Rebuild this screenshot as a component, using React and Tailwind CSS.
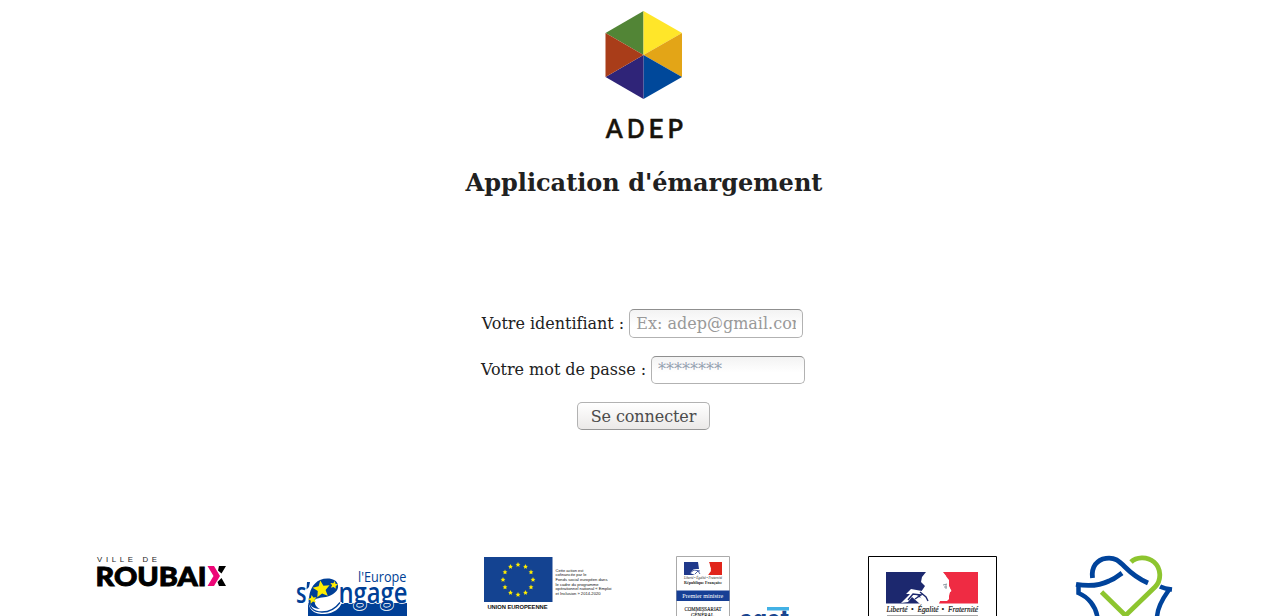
const serif = 'DejaVu Serif, serif';
const sans = 'Liberation Sans, sans-serif';

function AdepLogo() {
  return (
    <svg className="block h-[140px] w-[90px] shrink-0" viewBox="599 4 90 140" role="img" aria-label="ADEP">
      <path d="M643.5 55V11L605.5 33Z" fill="#528536" />
      <path d="M643.5 55V11L682 33Z" fill="#ffe629" />
      <path d="M643.5 55L682 33V77Z" fill="#e3a517" />
      <path d="M643.5 55L682 77L643.5 99Z" fill="#00489a" />
      <path d="M643.5 55V99L605.5 77Z" fill="#2f2478" />
      <path d="M643.5 55L605.5 77V33Z" fill="#a93d19" />
      <g fill="#17130b" stroke="#17130b" strokeWidth="0.5" fontFamily="Lato, sans-serif" fontWeight="600" fontSize="26.5">
        <text x="605.8" y="138" textLength="17" lengthAdjust="spacingAndGlyphs">A</text>
        <text x="627" y="138" textLength="17.5" lengthAdjust="spacingAndGlyphs">D</text>
        <text x="648.5" y="138" textLength="15" lengthAdjust="spacingAndGlyphs">E</text>
        <text x="667.5" y="138" textLength="15.5" lengthAdjust="spacingAndGlyphs">P</text>
      </g>
    </svg>
  );
}

function RoubaixLogo() {
  return (
    <svg className="h-[62px] w-[132px] shrink-0" viewBox="96 554 132 62">
      <text x="97" y="561.5" fontFamily={sans} fontSize="7.8" fill="#222" textLength="60">VILLE DE</text>
      <text x="95.5" y="585.6" fontFamily="Lato, sans-serif" fontWeight="900" fontSize="26.5" fill="#000" stroke="#000" strokeWidth="0.9" textLength="111" lengthAdjust="spacingAndGlyphs">ROUBAI</text>
      <path d="M207.5 566H214L220 576L214 586H207.5L213.5 576Z" fill="#ed0677" />
      <path d="M219 566H226L221.5 573.5L218 570.5ZM221.5 578L226 586H219L217.5 582Z" fill="#000" />
    </svg>
  );
}

function Star({ x, y, r, turn = 0 }) {
  const points = Array.from({ length: 10 }, (_, i) => {
    const a = ((i * 36 - 90 + turn) * Math.PI) / 180;
    const d = i % 2 ? r * 0.46 : r;
    return `${x + d * Math.cos(a)},${y + d * Math.sin(a)}`;
  }).join(' ');
  return <polygon points={points} fill="#ffed00" />;
}

function EngageLogo() {
  return (
    <svg className="h-[62px] w-[113px] shrink-0" viewBox="295 554 113 62">
      <path d="M308 603H407V616H308Z" fill="#003f96" />
      <text x="358" y="582" fontFamily="Open Sans, sans-serif" fontSize="15" fill="#003f96" textLength="48.5" lengthAdjust="spacingAndGlyphs">l'Europe</text>
      <g fontFamily="Open Sans, sans-serif" fontWeight="600" fontSize="28" fill="#003f96">
        <text x="296" y="602.5" textLength="10.5" lengthAdjust="spacingAndGlyphs">s</text>
        <text x="338.5" y="602.5" textLength="69" lengthAdjust="spacingAndGlyphs" stroke="#fff" strokeWidth="1.6" paintOrder="stroke">ngage</text>
      </g>
      <path d="M307 582H310L309 587L306.5 589.5Z" fill="#003f96" />
      <path d="M309 597C306 609 315 615 325 614C334 613 340 609 342 602H337L331 594Z" fill="#fff" />
      <path d="M309.5 598C308 607 313 612 322 612C330 612 336 608 340 602.5" fill="none" stroke="#003f96" strokeWidth="1.3" />
      <path d="M309 600C309 591 313 583 320 580C328 577 337 579 338 585C339 591 333 595 326 597C320 598 316 598 315 600C314 604 316 607 320 609C313 609 309 605 309 600Z" fill="#003f96" />
      <Star x={321.5} y={589.3} r={9} turn={-8} />
      <Star x={334} y={585} r={4.2} turn={12} />
      <Star x={312.5} y={599.5} r={4.6} turn={-12} />
    </svg>
  );
}

const notice = [
  ['Cette action est', 28],
  ['cofinancée par le', 31],
  ['Fonds social européen dans', 52],
  ['le cadre du programme', 43],
  ['opérationnel national « Emploi', 56],
  ['et Inclusion » 2014-2020', 45],
];

function UnionLogo() {
  return (
    <svg className="h-[62px] w-[130px] shrink-0" viewBox="483 554 130 62">
      <rect x="484" y="557" width="68.5" height="45" fill="#144391" />
      {Array.from({ length: 12 }, (_, i) => {
        const a = (i * Math.PI) / 6;
        return <Star key={i} x={518 + 15 * Math.sin(a)} y={579.7 - 15 * Math.cos(a)} r={2.6} />;
      })}
      <text x="487.5" y="609" fontFamily={sans} fontWeight="700" fontSize="5.8" fill="#111" textLength="60">UNION EUROPEENNE</text>
      {notice.map(([line, width], i) => (
        <text key={line} x="555.5" y={571.8 + i * 4.6} fontFamily={sans} fontSize="4.4" fill="#111" textLength={width} lengthAdjust="spacingAndGlyphs">{line}</text>
      ))}
    </svg>
  );
}

function CgetLogo() {
  return (
    <svg className="h-[62px] w-[115px] shrink-0" viewBox="675 554 115 62">
      <path d="M676.5 616V556.5H729.5V616" fill="#fff" stroke="#aaa" />
      <rect x="684" y="562" width="16" height="13" fill="#20398b" />
      <path d="M709 562H722V575H708L711 571Z" fill="#e1251b" />
      <path d="M698 562H709L711 569L709.5 571L708 575H695L690 573L694 569L699 569Z" fill="#fff" />
      <path d="M690 573L694 570L700 571M695 574L698 571L700 574" fill="none" stroke="#20398b" strokeWidth="0.8" />
      <g textAnchor="middle" fontFamily="Liberation Serif, serif" fill="#222">
        <text x="703" y="579" fontSize="3.8" fontStyle="italic" textLength="38" lengthAdjust="spacingAndGlyphs">Liberté • Égalité • Fraternité</text>
        <text x="703" y="584.3" fontSize="4.3" fontWeight="700" textLength="38" lengthAdjust="spacingAndGlyphs">République Française</text>
        <rect x="676.5" y="590.5" width="53" height="10.5" fill="#163f95" />
        <text x="702.8" y="597.6" fontSize="6.4" fill="#fff" textLength="41" lengthAdjust="spacingAndGlyphs">Premier ministre</text>
        <text x="703" y="611" fontSize="5.6" textLength="37" lengthAdjust="spacingAndGlyphs" stroke="#222" strokeWidth="0.15">COMMISSARIAT</text>
        <text x="702.5" y="616.5" fontSize="5.6" textLength="23" lengthAdjust="spacingAndGlyphs" stroke="#222" strokeWidth="0.15">GÉNÉRAL</text>
      </g>
      <rect x="767" y="607" width="22" height="3.5" fill="#42b1e5" />
      <text x="739" y="628" fontFamily="Inter, sans-serif" fontSize="25" fontWeight="800" fill="#19458f" textLength="50" lengthAdjust="spacingAndGlyphs">cget</text>
    </svg>
  );
}

function RepubliqueLogo() {
  return (
    <svg className="h-[62px] w-[130px] shrink-0" viewBox="867 554 130 62">
      <path d="M868.5 616V556.5H996.5V616" fill="#fff" stroke="#000" />
      <rect x="886" y="572" width="43" height="31.5" fill="#1c286e" />
      <path d="M942 572H978V603.5H939L940 600.5L948 600L949 596L950 592L951.5 591L949 586L949 580L945 575Z" fill="#ef2b43" />
      <path d="M926 572H943L946 576L947 582L951 591L949 593L949 599L947 601H940L938 604H926L920 597L921 592L925 586L921 582L922 577Z" fill="#fff" />
      <path d="M901 603L910 594L906 594L911 589L922 591L928 584L925 592L917 596L925 600L928 604H920L912 597L908 602Z" fill="#fff" />
      <path d="M908 600L913 594L921 595L915 599M920 592L926 597L928 601" fill="none" stroke="#1c286e" strokeWidth="1.4" />
      <path d="M943 585L947 584M944 587H947M946 584L946 589" stroke="#8d98a0" strokeWidth="1" />
      <g fontFamily="Liberation Serif, serif" fontStyle="italic" fontSize="7.4" fill="#111" stroke="#111" strokeWidth="0.15">
        <text x="886.5" y="612.3" textLength="21">Liberté</text>
        <text x="911" y="612.3">•</text>
        <text x="917.5" y="612.3" textLength="21">Égalité</text>
        <text x="941.5" y="612.3">•</text>
        <text x="948" y="612.3" textLength="30">Fraternité</text>
      </g>
      <path d="M887 615.5H978" stroke="#aaa" />
    </svg>
  );
}

function HeartLogo() {
  return (
    <svg className="h-[62px] w-[100px] shrink-0" viewBox="1074 554 100 62">
      <g fill="none" strokeWidth="4.8">
        <path d="M1101.5 592L1125.5 615.5L1155 587C1162 580 1161 568 1154 562C1147 556 1136 557 1131 562" stroke="#8dc52f" />
        <path d="M1092.5 578C1091 567 1097 559.5 1106 558.3C1115 557 1119 561 1125 567C1133 575 1141 580 1148 583" stroke="#00439b" />
        <path d="M1076 584.3C1086 586 1099 586 1109 581C1115 579 1118 576 1122 573" stroke="#00439b" />
        <path d="M1078.5 584V593C1088 597 1096 606 1097.5 618M1157 618C1157 609 1161 601 1168.5 590.5M1172 589.5C1167 589 1163 588 1160 586.5" stroke="#00439b" strokeWidth="4.5" />
      </g>
    </svg>
  );
}

const inputClass =
  'rounded-[5px] border border-[#b2b2b2] border-t-[#8f8f8f] bg-linear-to-b from-[#f3f3f3] to-white to-60% px-[6px] text-base leading-[19px] outline-none';

export default function App() {
  return (
    <div className="flex h-[616px] w-full flex-col overflow-hidden bg-white text-base text-[#212121]" style={{ fontFamily: serif }}>
      <header className="flex flex-col items-center pt-1">
        <AdepLogo />
        <h1 className="mt-[25px] ml-px text-2xl leading-[28px] font-bold whitespace-nowrap">Application d'émargement</h1>
      </header>
      <form className="mt-[112px] flex flex-col items-center" onSubmit={(e) => e.preventDefault()}>
        <label className="mr-[2px] flex h-[29px] items-center gap-[5px] whitespace-nowrap">
          <span className="tracking-[-0.02px]">Votre identifiant :</span>
          <input className={`${inputClass} h-[29px] w-[174px] placeholder:text-[#999]`} placeholder="Ex: adep@gmail.com" />
        </label>
        <label className="mt-[18px] mr-px flex h-[28px] items-center gap-[5px] whitespace-nowrap">
          <span className="tracking-[-0.02px]">Votre mot de passe :</span>
          <input className={`${inputClass} h-[28px] w-[154px] pb-[1px] placeholder:text-[#94a0b0]`} type="password" placeholder="********" />
        </label>
        <button className="mt-[18px] h-[28px] w-[133px] rounded-[5px] border border-[#b2b2b2] border-b-[#979797] bg-linear-to-b from-white to-[#ebe9e8] pt-[2px] text-base leading-none tracking-[-0.1px] text-[#4c4c4c]">Se connecter</button>
      </form>
      <footer className="mt-[124px] flex items-start pl-[96px]">
        <RoubaixLogo />
        <div className="ml-[67px] flex"><EngageLogo /></div>
        <div className="ml-[75px] flex"><UnionLogo /></div>
        <div className="ml-[62px] flex"><CgetLogo /></div>
        <div className="ml-[77px] flex"><RepubliqueLogo /></div>
        <div className="ml-[77px] flex"><HeartLogo /></div>
      </footer>
    </div>
  );
}
